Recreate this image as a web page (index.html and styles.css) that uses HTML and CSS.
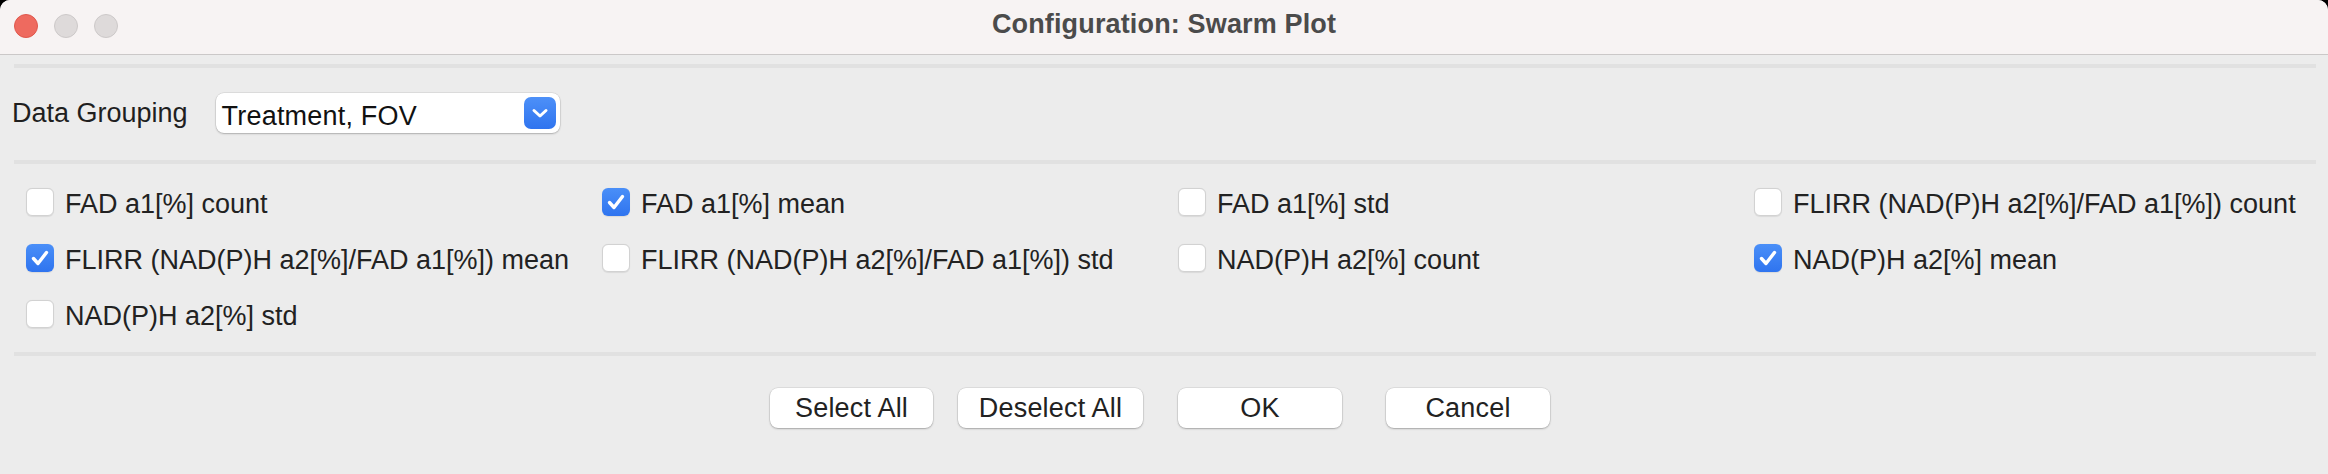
FILE: index.html
```html
<!DOCTYPE html>
<html lang="en">
<head>
<meta charset="utf-8">
<title>Configuration: Swarm Plot</title>
<link rel="stylesheet" href="styles.css">
</head>
<body>
<div class="window">
  <header class="titlebar">
    <div class="lights">
      <span class="light red"></span>
      <span class="light grey"></span>
      <span class="light grey"></span>
    </div>
    <div class="title">Configuration: Swarm Plot</div>
    <div class="spacer"></div>
  </header>

  <div class="separator sep-top"></div>

  <div class="grouping">
    <span class="group-label">Data Grouping</span>
    <div class="popup">
      <span class="popup-text">Treatment, FOV</span>
      <span class="popup-btn">
        <svg width="32" height="32" viewBox="0 0 32 32"><path d="M10 13.5 L16 19 L22 13.5" fill="none" stroke="#fff" stroke-width="3" stroke-linecap="round" stroke-linejoin="round"/></svg>
      </span>
    </div>
  </div>

  <div class="separator sep-mid"></div>

  <div class="checks">
    <label class="check"><span class="box"></span><span class="lbl">FAD a1[%] count</span></label>
    <label class="check"><span class="box on"><svg width="28" height="28" viewBox="0 0 28 28"><path d="M7.5 14.5 L12 19.5 L20.5 8.5" fill="none" stroke="#fff" stroke-width="3.4" stroke-linecap="round" stroke-linejoin="round"/></svg></span><span class="lbl">FAD a1[%] mean</span></label>
    <label class="check"><span class="box"></span><span class="lbl">FAD a1[%] std</span></label>
    <label class="check"><span class="box"></span><span class="lbl">FLIRR (NAD(P)H a2[%]/FAD a1[%]) count</span></label>

    <label class="check"><span class="box on"><svg width="28" height="28" viewBox="0 0 28 28"><path d="M7.5 14.5 L12 19.5 L20.5 8.5" fill="none" stroke="#fff" stroke-width="3.4" stroke-linecap="round" stroke-linejoin="round"/></svg></span><span class="lbl">FLIRR (NAD(P)H a2[%]/FAD a1[%]) mean</span></label>
    <label class="check"><span class="box"></span><span class="lbl">FLIRR (NAD(P)H a2[%]/FAD a1[%]) std</span></label>
    <label class="check"><span class="box"></span><span class="lbl">NAD(P)H a2[%] count</span></label>
    <label class="check"><span class="box on"><svg width="28" height="28" viewBox="0 0 28 28"><path d="M7.5 14.5 L12 19.5 L20.5 8.5" fill="none" stroke="#fff" stroke-width="3.4" stroke-linecap="round" stroke-linejoin="round"/></svg></span><span class="lbl">NAD(P)H a2[%] mean</span></label>

    <label class="check"><span class="box"></span><span class="lbl">NAD(P)H a2[%] std</span></label>
  </div>

  <div class="separator sep-bottom"></div>

  <div class="buttons">
    <button class="btn btn-select">Select All</button>
    <button class="btn btn-deselect">Deselect All</button>
    <button class="btn btn-ok">OK</button>
    <button class="btn btn-cancel">Cancel</button>
  </div>
</div>
</body>
</html>
```
FILE: styles.css
```css
html {
  background: #000;
}
body {
  margin: 0;
  width: 2328px;
  height: 474px;
  overflow: hidden;
  font-family: "Liberation Sans", Arial, sans-serif;
  color: #1f1f1f;
}
.window {
  width: 2328px;
  height: 474px;
  background: #ececec;
  border-radius: 10px 10px 0 0;
  overflow: hidden;
}
.titlebar {
  height: 54px;
  background: #f7f3f3;
  border-bottom: 1px solid #cbc8c8;
  display: grid;
  grid-template-columns: 1fr auto 1fr;
  align-items: start;
}
.lights {
  display: flex;
  gap: 16px;
  padding-left: 14px;
  margin-top: 14px;
}
.light {
  width: 24px;
  height: 24px;
  border-radius: 50%;
  box-sizing: border-box;
}
.light.red {
  background: #ee6a5f;
  border: 1px solid #e0574c;
}
.light.grey {
  background: #dedada;
  border: 1px solid #cdc9c9;
}
.title {
  margin-top: 9px;
  font-size: 27px;
  line-height: 30px;
  font-weight: bold;
  letter-spacing: 0.15px;
  color: #4b4b4b;
}
.separator {
  height: 4px;
  background: #e1e1e1;
  margin: 0 12px 0 14px;
}
.sep-top {
  margin-top: 9px;
}
.grouping {
  margin-top: 25px;
  height: 40px;
  display: flex;
  align-items: center;
  padding-left: 12px;
  gap: 28px;
}
.group-label {
  font-size: 27px;
  line-height: 40px;
}
.popup {
  width: 344px;
  height: 40px;
  box-sizing: border-box;
  background: #fff;
  border-radius: 8px;
  box-shadow: 0 0 0 0.5px rgba(0, 0, 0, 0.12), 0 1px 2px rgba(0, 0, 0, 0.22);
  display: flex;
  align-items: center;
  justify-content: space-between;
  padding: 0 4px 0 6px;
}
.popup-text {
  font-size: 27px;
  line-height: 40px;
  letter-spacing: 0.2px;
  padding-top: 3px;
  height: 40px;
  box-sizing: border-box;
  color: #111;
}
.popup-btn {
  width: 32px;
  height: 32px;
  border-radius: 7px;
  background: linear-gradient(#4d90f8, #2f74ef);
  display: flex;
}
.sep-mid {
  margin-top: 27px;
}
.checks {
  margin-top: 24px;
  padding: 0 12px;
  display: grid;
  grid-template-columns: repeat(4, 576px);
  grid-auto-rows: 28px;
  row-gap: 28px;
}
.check {
  display: flex;
  align-items: flex-start;
  padding-left: 14px;
  gap: 11px;
}
.box {
  width: 28px;
  height: 28px;
  flex: none;
  box-sizing: border-box;
  border-radius: 6px;
  background: #fff;
  border: 1px solid #d2d2d2;
  box-shadow: 0 0.5px 1px rgba(0, 0, 0, 0.08);
  display: flex;
}
.box.on {
  border: none;
  background: linear-gradient(#4a8ff8, #2f74ef);
}
.lbl {
  font-size: 27px;
  line-height: 32px;
  white-space: nowrap;
  color: #222;
}
.sep-bottom {
  margin-top: 24px;
}
.buttons {
  margin-top: 32px;
  display: flex;
  justify-content: center;
  padding-right: 8px;
}
.btn {
  height: 40px;
  box-sizing: border-box;
  border: none;
  background: #fff;
  border-radius: 8px;
  box-shadow: 0 0 0 0.5px rgba(0, 0, 0, 0.12), 0 1px 2px rgba(0, 0, 0, 0.25);
  font-family: "Liberation Sans", Arial, sans-serif;
  font-size: 27px;
  line-height: 40px;
  letter-spacing: 0.2px;
  padding: 0;
  color: #222;
}
.btn-select {
  width: 163px;
  margin-right: 25px;
}
.btn-deselect {
  width: 185px;
  margin-right: 35px;
}
.btn-ok {
  width: 164px;
  margin-right: 44px;
}
.btn-cancel {
  width: 164px;
}
```
